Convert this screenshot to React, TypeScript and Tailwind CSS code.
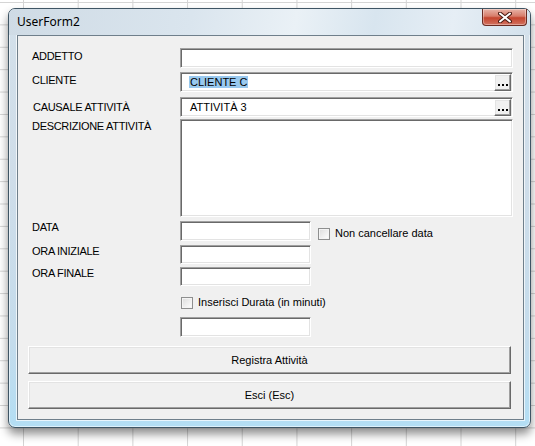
import React from 'react';

const sunken =
  'bg-white border border-t-[#a0a0a0] border-l-[#a0a0a0] border-b-white border-r-white shadow-[inset_1px_1px_0_#696969,inset_-1px_-1px_0_#e3e3e3]';
const raised =
  'bg-[#f0f0f0] border border-t-white border-l-white border-b-[#696969] border-r-[#696969] shadow-[inset_-1px_-1px_0_#a0a0a0,inset_1px_1px_0_#e3e3e3]';

function Label({ text, className = '' }: { text: string; className?: string }) {
  return (
    <div className={`w-[148px] shrink-0 text-[11px] leading-[14px] tracking-[-0.3px] text-black ${className}`}>
      {text}
    </div>
  );
}

function DotsButton() {
  return (
    <div className={`w-[17px] h-[17px] flex items-end justify-center gap-[2px] pb-[4px] ${raised}`}>
      <span className="w-[2px] h-[2px] bg-black" />
      <span className="w-[2px] h-[2px] bg-black" />
      <span className="w-[2px] h-[2px] bg-black" />
    </div>
  );
}

function Combo({ value, selected }: { value: string; selected?: boolean }) {
  return (
    <div className={`w-[333px] h-[20px] flex items-center pl-[9px] pr-[1px] ${sunken}`}>
      <span className="flex-1 text-[11px] leading-[13px]">
        <span className={selected ? 'bg-[#99c9ef] px-[1px] -ml-[1px]' : ''}>{value}</span>
      </span>
      <DotsButton />
    </div>
  );
}

function CheckBox({ label, className = '' }: { label: string; className?: string }) {
  return (
    <div className={`flex items-center gap-[5px] ${className}`}>
      <span className="w-[12px] h-[12px] border border-[#8e8f8f] bg-[linear-gradient(135deg,#dcdcdc,#ffffff)] shadow-[inset_0_0_0_1px_#f4f4f4]" />
      <span className="text-[11px] leading-[13px] text-black">{label}</span>
    </div>
  );
}

function CloseButton() {
  return (
    <div className="absolute top-0 right-[3px] w-[45px] h-[17px] rounded-b-[4px] border border-t-0 border-[#6a2b22] bg-[linear-gradient(to_bottom,#e8b4a8_0%,#d77c6a_45%,#c4452f_55%,#d27260_100%)] shadow-[inset_0_0_0_1px_rgba(255,255,255,0.35)] flex items-center justify-center">
      <svg width="14" height="11" viewBox="0 0 14 11">
        <path d="M2 1.5 L12 9.5 M12 1.5 L2 9.5" stroke="#4a1a12" strokeWidth="4" strokeLinecap="round" />
        <path d="M2 1.5 L12 9.5 M12 1.5 L2 9.5" stroke="#ffffff" strokeWidth="2" strokeLinecap="round" />
      </svg>
    </div>
  );
}

export default function App() {
  return (
    <div
      className="w-[535px] h-[446px] overflow-hidden bg-white pl-[8px] pt-[8px] bg-[linear-gradient(to_right,#d4d4d4_1px,transparent_1px),linear-gradient(to_bottom,#d4d4d4_1px,transparent_1px)] [background-size:54.7px_22.4px] [background-position:23px_2px]"
      style={{ fontFamily: '"Liberation Sans", Arial, sans-serif' }}
    >
      {/* window frame */}
      <div className="relative w-[523px] h-[420px] rounded-[7px] border border-[#3f5564] bg-[linear-gradient(to_bottom,#d3e0ea_0%,#cfdde9_40%,#c4dcec_80%,#b3def4_100%)] shadow-[0_6px_10px_rgba(0,0,0,0.45),inset_0_0_0_1px_rgba(255,255,255,0.55)] flex flex-col">
        {/* title bar */}
        <div className="relative h-[26px] flex items-center pl-[8px] rounded-t-[6px] bg-[linear-gradient(100deg,#cfdbe5_0%,#dae5ee_35%,#eaf1f6_55%,#d8e5ef_70%,#e6eef5_85%,#d3e1ec_100%)]">
          <span className="text-[12px] text-black" style={{ fontFamily: '"Noto Sans", sans-serif' }}>
            UserForm2
          </span>
          <CloseButton />
        </div>

        {/* client area */}
        <div className="ml-[8px] w-[507px] h-[385px] bg-[#f0f0f0] border border-[#6f7f8b] shadow-[0_0_0_1px_rgba(255,255,255,0.7)] pl-[14px] pt-[12px] flex flex-col">
          <div className="flex items-start h-[20px]">
            <Label text="ADDETTO" className="mt-[1px]" />
            <div className={`w-[333px] h-[20px] ${sunken}`} />
          </div>

          <div className="flex items-start h-[20px] mt-[4px]">
            <Label text="CLIENTE" className="mt-[1px]" />
            <Combo value="CLIENTE C" selected />
          </div>

          <div className="flex items-start h-[20px] mt-[5px]">
            <Label text="CAUSALE ATTIVITÀ" className="mt-[3px] pl-[1px]" />
            <Combo value="ATTIVITÀ 3" />
          </div>

          <div className="flex items-start mt-[2px]">
            <Label text="DESCRIZIONE ATTIVITÀ" />
            <div className={`w-[333px] h-[98px] ${sunken}`} />
          </div>

          <div className="flex items-start h-[20px] mt-[4px]">
            <Label text="DATA" className="-mt-[1px]" />
            <div className={`w-[131px] h-[20px] ${sunken}`} />
            <CheckBox label="Non cancellare data" className="ml-[7px] mt-[6px]" />
          </div>

          <div className="flex items-start h-[19px] mt-[4px]">
            <Label text="ORA INIZIALE" className="-mt-[1px]" />
            <div className={`w-[131px] h-[19px] ${sunken}`} />
          </div>

          <div className="flex items-start h-[19px] mt-[3px]">
            <Label text="ORA FINALE" className="-mt-[1px]" />
            <div className={`w-[131px] h-[19px] ${sunken}`} />
          </div>

          <div className="flex items-start h-[12px] mt-[10px] pl-[149px]">
            <CheckBox label="Inserisci Durata (in minuti)" />
          </div>

          <div className="flex items-start h-[20px] mt-[9px] pl-[148px]">
            <div className={`w-[131px] h-[20px] ${sunken}`} />
          </div>

          <button
            className={`mt-[9px] -ml-[4px] w-[483px] h-[28px] flex items-center justify-center text-[11px] text-black ${raised}`}
          >
            Registra Attività
          </button>
          <button
            className={`mt-[7px] -ml-[4px] w-[483px] h-[28px] flex items-center justify-center text-[11px] text-black ${raised}`}
          >
            Esci (Esc)
          </button>
        </div>
      </div>
    </div>
  );
}
